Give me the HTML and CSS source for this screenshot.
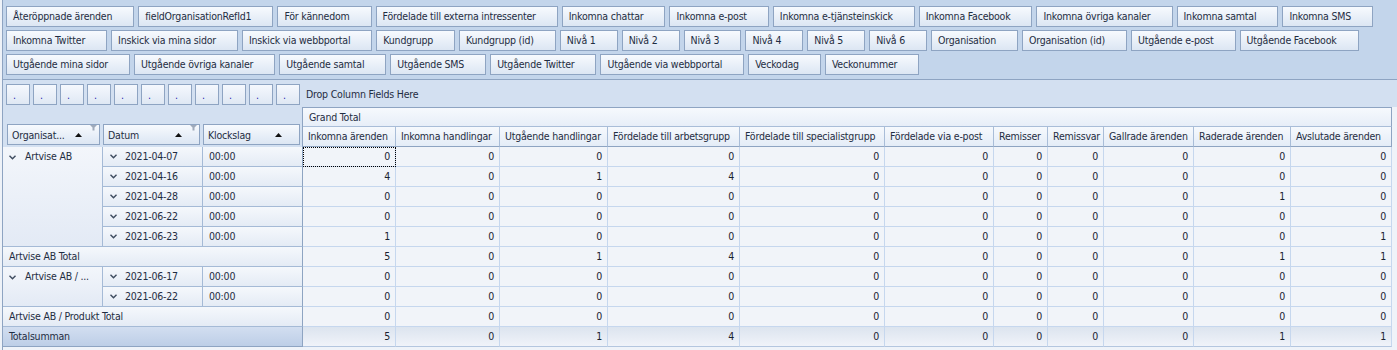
FILE: index.html
```html
<!DOCTYPE html>
<html lang="sv">
<head>
<meta charset="utf-8">
<title>Pivot</title>
<link rel="stylesheet" href="styles.css">
</head>
<body>
<div class="pivot">
  <div class="fields">
    <div class="frow">
      <span class="fbtn">Återöppnade ärenden</span>
      <span class="fbtn">fieldOrganisationRefId1</span>
      <span class="fbtn">För kännedom</span>
      <span class="fbtn">Fördelade till externa intressenter</span>
      <span class="fbtn">Inkomna chattar</span>
      <span class="fbtn">Inkomna e-post</span>
      <span class="fbtn">Inkomna e-tjänsteinskick</span>
      <span class="fbtn">Inkomna Facebook</span>
      <span class="fbtn">Inkomna övriga kanaler</span>
      <span class="fbtn">Inkomna samtal</span>
      <span class="fbtn">Inkomna SMS</span>
    </div>
    <div class="frow">
      <span class="fbtn">Inkomna Twitter</span>
      <span class="fbtn">Inskick via mina sidor</span>
      <span class="fbtn">Inskick via webbportal</span>
      <span class="fbtn">Kundgrupp</span>
      <span class="fbtn">Kundgrupp (id)</span>
      <span class="fbtn">Nivå 1</span>
      <span class="fbtn">Nivå 2</span>
      <span class="fbtn">Nivå 3</span>
      <span class="fbtn">Nivå 4</span>
      <span class="fbtn">Nivå 5</span>
      <span class="fbtn">Nivå 6</span>
      <span class="fbtn">Organisation</span>
      <span class="fbtn">Organisation (id)</span>
      <span class="fbtn">Utgående e-post</span>
      <span class="fbtn">Utgående Facebook</span>
    </div>
    <div class="frow">
      <span class="fbtn">Utgående mina sidor</span>
      <span class="fbtn">Utgående övriga kanaler</span>
      <span class="fbtn">Utgående samtal</span>
      <span class="fbtn">Utgående SMS</span>
      <span class="fbtn">Utgående Twitter</span>
      <span class="fbtn">Utgående via webbportal</span>
      <span class="fbtn">Veckodag</span>
      <span class="fbtn">Veckonummer</span>
    </div>
  </div>

  <div class="colarea">
    <span class="dot">.</span><span class="dot">.</span><span class="dot">.</span><span class="dot">.</span><span class="dot">.</span><span class="dot">.</span><span class="dot">.</span><span class="dot">.</span><span class="dot">.</span><span class="dot">.</span><span class="dot">.</span>
    <span class="drop">Drop Column Fields Here</span>
  </div>

  <div class="grid">
    <div class="rowfields">
      <div class="rfbtn w93"><span class="rftext">Organisat...</span><svg class="sort" width="7" height="4" viewBox="0 0 7 4"><path d="M0 4 L3.5 0 L7 4 Z" fill="#111"/></svg><svg class="filt" width="7" height="6" viewBox="0 0 7 6"><path d="M0 0 H7 L4.5 2.5 V5.5 H2.5 V2.5 Z" fill="#9faabb"/></svg></div>
      <div class="rfbtn w97"><span class="rftext">Datum</span><svg class="sort" width="7" height="4" viewBox="0 0 7 4"><path d="M0 4 L3.5 0 L7 4 Z" fill="#111"/></svg><svg class="filt" width="7" height="6" viewBox="0 0 7 6"><path d="M0 0 H7 L4.5 2.5 V5.5 H2.5 V2.5 Z" fill="#9faabb"/></svg></div>
      <div class="rfbtn w97"><span class="rftext">Klockslag</span><svg class="sort" width="7" height="4" viewBox="0 0 7 4"><path d="M0 4 L3.5 0 L7 4 Z" fill="#111"/></svg></div>
    </div>
    <div class="gt">Grand Total</div>
    <div class="ch">Inkomna ärenden</div>
    <div class="ch">Inkomna handlingar</div>
    <div class="ch">Utgående handlingar</div>
    <div class="ch">Fördelade till arbetsgrupp</div>
    <div class="ch">Fördelade till specialistgrupp</div>
    <div class="ch">Fördelade via e-post</div>
    <div class="ch">Remisser</div>
    <div class="ch">Remissvar</div>
    <div class="ch">Gallrade ärenden</div>
    <div class="ch">Raderade ärenden</div>
    <div class="ch last">Avslutade ärenden</div>

    <div class="rh org org-a"><svg class="chev" width="7" height="5" viewBox="0 0 7 5"><path d="M0.5 0.8 L3.5 3.8 L6.5 0.8" fill="none" stroke="#3d4b5e" stroke-width="1.4"/></svg><span>Artvise AB</span></div>

    <div class="rh date"><svg class="chev" width="7" height="5" viewBox="0 0 7 5"><path d="M0.5 0.8 L3.5 3.8 L6.5 0.8" fill="none" stroke="#3d4b5e" stroke-width="1.4"/></svg><span>2021-04-07</span></div>
    <div class="rh time">00:00</div>
    <div class="d focus">0</div><div class="d">0</div><div class="d">0</div><div class="d">0</div><div class="d">0</div><div class="d">0</div><div class="d">0</div><div class="d">0</div><div class="d">0</div><div class="d">0</div><div class="d">0</div>

    <div class="rh date"><svg class="chev" width="7" height="5" viewBox="0 0 7 5"><path d="M0.5 0.8 L3.5 3.8 L6.5 0.8" fill="none" stroke="#3d4b5e" stroke-width="1.4"/></svg><span>2021-04-16</span></div>
    <div class="rh time">00:00</div>
    <div class="d">4</div><div class="d">0</div><div class="d">1</div><div class="d">4</div><div class="d">0</div><div class="d">0</div><div class="d">0</div><div class="d">0</div><div class="d">0</div><div class="d">0</div><div class="d">0</div>

    <div class="rh date"><svg class="chev" width="7" height="5" viewBox="0 0 7 5"><path d="M0.5 0.8 L3.5 3.8 L6.5 0.8" fill="none" stroke="#3d4b5e" stroke-width="1.4"/></svg><span>2021-04-28</span></div>
    <div class="rh time">00:00</div>
    <div class="d">0</div><div class="d">0</div><div class="d">0</div><div class="d">0</div><div class="d">0</div><div class="d">0</div><div class="d">0</div><div class="d">0</div><div class="d">0</div><div class="d">1</div><div class="d">0</div>

    <div class="rh date"><svg class="chev" width="7" height="5" viewBox="0 0 7 5"><path d="M0.5 0.8 L3.5 3.8 L6.5 0.8" fill="none" stroke="#3d4b5e" stroke-width="1.4"/></svg><span>2021-06-22</span></div>
    <div class="rh time">00:00</div>
    <div class="d">0</div><div class="d">0</div><div class="d">0</div><div class="d">0</div><div class="d">0</div><div class="d">0</div><div class="d">0</div><div class="d">0</div><div class="d">0</div><div class="d">0</div><div class="d">0</div>

    <div class="rh date"><svg class="chev" width="7" height="5" viewBox="0 0 7 5"><path d="M0.5 0.8 L3.5 3.8 L6.5 0.8" fill="none" stroke="#3d4b5e" stroke-width="1.4"/></svg><span>2021-06-23</span></div>
    <div class="rh time">00:00</div>
    <div class="d">1</div><div class="d">0</div><div class="d">0</div><div class="d">0</div><div class="d">0</div><div class="d">0</div><div class="d">0</div><div class="d">0</div><div class="d">0</div><div class="d">0</div><div class="d">1</div>

    <div class="rh tot">Artvise AB Total</div>
    <div class="d">5</div><div class="d">0</div><div class="d">1</div><div class="d">4</div><div class="d">0</div><div class="d">0</div><div class="d">0</div><div class="d">0</div><div class="d">0</div><div class="d">1</div><div class="d">1</div>

    <div class="rh org org-b"><svg class="chev" width="7" height="5" viewBox="0 0 7 5"><path d="M0.5 0.8 L3.5 3.8 L6.5 0.8" fill="none" stroke="#3d4b5e" stroke-width="1.4"/></svg><span>Artvise AB / ...</span></div>

    <div class="rh date"><svg class="chev" width="7" height="5" viewBox="0 0 7 5"><path d="M0.5 0.8 L3.5 3.8 L6.5 0.8" fill="none" stroke="#3d4b5e" stroke-width="1.4"/></svg><span>2021-06-17</span></div>
    <div class="rh time">00:00</div>
    <div class="d">0</div><div class="d">0</div><div class="d">0</div><div class="d">0</div><div class="d">0</div><div class="d">0</div><div class="d">0</div><div class="d">0</div><div class="d">0</div><div class="d">0</div><div class="d">0</div>

    <div class="rh date"><svg class="chev" width="7" height="5" viewBox="0 0 7 5"><path d="M0.5 0.8 L3.5 3.8 L6.5 0.8" fill="none" stroke="#3d4b5e" stroke-width="1.4"/></svg><span>2021-06-22</span></div>
    <div class="rh time">00:00</div>
    <div class="d">0</div><div class="d">0</div><div class="d">0</div><div class="d">0</div><div class="d">0</div><div class="d">0</div><div class="d">0</div><div class="d">0</div><div class="d">0</div><div class="d">0</div><div class="d">0</div>

    <div class="rh tot">Artvise AB / Produkt Total</div>
    <div class="d">0</div><div class="d">0</div><div class="d">0</div><div class="d">0</div><div class="d">0</div><div class="d">0</div><div class="d">0</div><div class="d">0</div><div class="d">0</div><div class="d">0</div><div class="d">0</div>

    <div class="rh tot gs">Totalsumman</div>
    <div class="d gs">5</div><div class="d gs">0</div><div class="d gs">1</div><div class="d gs">4</div><div class="d gs">0</div><div class="d gs">0</div><div class="d gs">0</div><div class="d gs">0</div><div class="d gs">0</div><div class="d gs">1</div><div class="d gs">1</div>
  </div>
</div>
</body>
</html>
```
FILE: styles.css
```css
* { box-sizing: border-box; }

html, body {
  margin: 0;
  padding: 0;
}

body {
  background: #eef2f8;
  font-family: "DejaVu Sans Condensed", "DejaVu Sans", sans-serif;
  font-size: 10.5px;
  letter-spacing: -0.2px;
  color: #1f2d42;
  overflow: hidden;
}

.pivot {
  margin-left: 2px;
  border-left: 1px solid #8ea4c2;
  height: 350px;
  background: #eff3f9;
}

/* field list */
.fields {
  background: #c3d5eb;
  border-bottom: 1px solid #8ea4c2;
  padding: 6px 0 4px 3px;
  display: flex;
  flex-direction: column;
  gap: 3px;
}

.frow {
  display: flex;
  gap: 4px;
  white-space: nowrap;
}

.fbtn {
  height: 21px;
  line-height: 19px;
  padding: 0 21px 0 6px;
  border: 1px solid #8ea4c2;
  background: linear-gradient(#f7fafe, #dce6f3);
  white-space: nowrap;
}

/* column drop area */
.colarea {
  background: #d3e0f1;
  height: 27px;
  padding: 4px 0 0 3px;
  display: flex;
  gap: 3px;
  align-items: flex-start;
}

.dot {
  width: 24px;
  height: 21px;
  line-height: 20px;
  padding-left: 6px;
  border: 1px solid #8ea4c2;
  background: linear-gradient(#f5f8fd, #dfe8f4);
  color: #2a2ab0;
}

.drop {
  margin-left: 3px;
  line-height: 21px;
}

/* grid */
.grid {
  display: grid;
  grid-template-columns: 100px 100px 100px 93px 104px 108px 132px 145px 109px 54px 56px 90px 97px 101px;
  grid-template-rows: repeat(12, 20px);
}

.rowfields {
  grid-column: 1 / 4;
  grid-row: 1 / 3;
  background: #d3e0f1;
  border-right: 1px solid #8ea4c2;
  display: flex;
  align-items: flex-end;
  gap: 3px;
  padding: 0 0 2px 4px;
}

.rfbtn {
  position: relative;
  height: 21px;
  border: 1px solid #8ea4c2;
  background: linear-gradient(#f7fafe, #dce6f3);
  display: flex;
  align-items: center;
  padding-left: 4px;
  padding-right: 17px;
}

.w93 { width: 93px; }
.w97 { width: 97px; }

.rftext {
  flex: 1;
  white-space: nowrap;
  overflow: hidden;
}

.sort {
  display: block;
  margin-top: 1px;
}

.filt {
  position: absolute;
  top: 0;
  right: 2px;
}

.gt {
  grid-column: 4 / 15;
  grid-row: 1;
  border-top: 1px solid #8ea4c2;
  border-right: 1px solid #8ea4c2;
  border-bottom: 1px solid #a9bdd8;
  background: linear-gradient(#f6f9fd, #e7eef8);
  padding-left: 6px;
  line-height: 18px;
}

.ch {
  grid-row: 2;
  border-right: 1px solid #a9bdd8;
  border-bottom: 1px solid #8ea4c2;
  background: linear-gradient(#f6f9fd, #e4ecf7);
  padding-left: 5px;
  line-height: 19px;
  white-space: nowrap;
  overflow: hidden;
}

.ch.last { border-right-color: #8ea4c2; }

/* row headers */
.rh {
  background: linear-gradient(#f5f8fc, #e4ebf5);
  border-right: 1px solid #a5bad6;
  border-bottom: 1px solid #a5bad6;
  line-height: 19px;
  white-space: nowrap;
  overflow: hidden;
  display: flex;
  align-items: center;
}

.org {
  grid-column: 1;
  align-items: flex-start;
  padding-left: 6px;
  gap: 9px;
  background: linear-gradient(#f3f6fb, #e3eaf5);
}

.org .chev { margin-top: 8px; }

.org-a { grid-row: 3 / span 5; }
.org-b { grid-row: 9 / span 2; }

.date {
  padding-left: 7px;
  gap: 8px;
}

.time {
  padding-left: 6px;
  border-right-color: #8ea4c2;
}

.tot {
  grid-column: span 3;
  padding-left: 6px;
  border-right-color: #8ea4c2;
}

.rh.gs {
  background: linear-gradient(#d2def0, #bdcee7);
  border-bottom-color: #8ea4c2;
}

/* data cells */
.d {
  background: #f1f4f9;
  border-right: 1px solid #c6d7ee;
  border-bottom: 1px solid #c6d7ee;
  text-align: right;
  padding-right: 5px;
  line-height: 19px;
  color: #1a2230;
}

.d.gs {
  background: linear-gradient(#dce4ef, #f0f3f9);
  border-bottom-color: #b4c6df;
}

.focus {
  outline: 1px dotted #000;
  outline-offset: -1px;
}
```
